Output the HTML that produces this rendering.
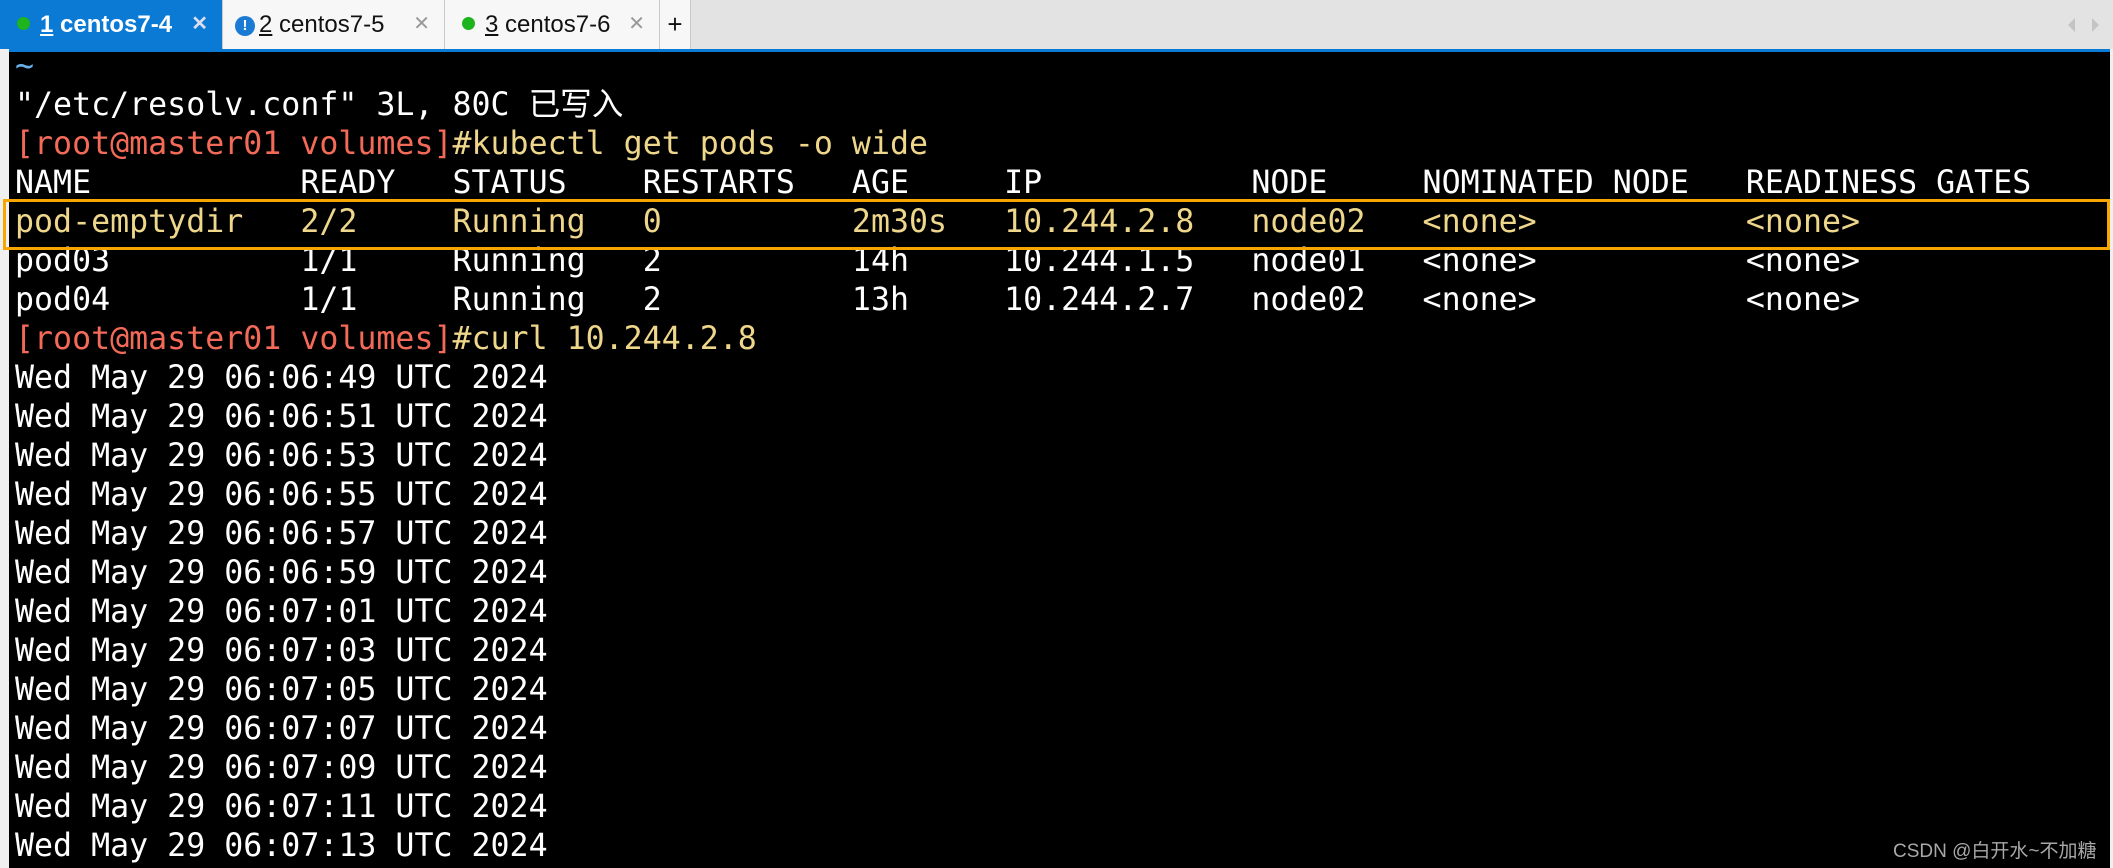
<!DOCTYPE html>
<html><head><meta charset="utf-8"><style>
html,body{margin:0;padding:0;width:2113px;height:868px;overflow:hidden;background:#f0f0f0;}
#tabs{position:absolute;left:0;top:0;width:2113px;height:49px;background:#e3e3e3;}
.tab{position:absolute;top:0;height:49px;background:#f7f7f7;border-right:1px solid #c8c8c8;font-family:"Liberation Sans",sans-serif;font-size:24px;line-height:49px;color:#111;white-space:nowrap;}
.tab .x{position:absolute;right:14px;top:0;color:#999;font-size:20px;}
.dot{display:inline-block;width:13px;height:13px;border-radius:50%;background:#1db41d;margin:0 10px 0 17px;vertical-align:2px;}
#blue{position:absolute;left:9px;top:49px;width:2101px;height:3px;background:#0a7ad4;}
#term{position:absolute;left:9px;top:52px;width:2101px;height:816px;background:#000;}
pre{position:absolute;left:15px;top:47px;margin:0;font-family:"DejaVu Sans Mono","Liberation Mono","Noto Sans CJK SC",monospace;font-size:31.6px;line-height:39px;color:#fff;}
.r{color:#f46a58}.y{color:#eed68a}.b{color:#6ab0e8}
#box{position:absolute;left:3px;top:199px;width:2101px;height:45px;border:3px solid #f7a600;}
#wm{position:absolute;left:1893px;top:836px;font-family:"Liberation Sans","Noto Sans CJK SC",sans-serif;font-size:19px;color:#a8a8a8;}
</style></head><body>
<div id="tabs">
 <div class="tab" style="left:0;width:222px;background:#0a7ad4;color:#fff;font-weight:bold;"><span class="dot"></span><u>1</u> centos7-4<span class="x" style="color:#dde">✕</span></div>
 <div class="tab" style="left:223px;width:221px;"><span style="display:inline-block;width:20px;height:20px;border-radius:50%;background:#1a7ad4;color:#fff;font-size:15px;line-height:20px;text-align:center;font-weight:bold;margin:0 4px 0 12px;vertical-align:2px;">!</span><u>2</u> centos7-5<span class="x">✕</span></div>
 <div class="tab" style="left:445px;width:214px;"><span class="dot"></span><u>3</u> centos7-6<span class="x">✕</span></div>
 <div class="tab" style="left:660px;width:30px;text-align:center;font-size:26px;">+</div>
 <div style="position:absolute;left:2068px;top:18px;width:0;height:0;border-top:7px solid transparent;border-bottom:7px solid transparent;border-right:7px solid #c4c4c4;"></div>
 <div style="position:absolute;left:2092px;top:18px;width:0;height:0;border-top:7px solid transparent;border-bottom:7px solid transparent;border-left:7px solid #c4c4c4;"></div>
</div>
<div id="blue"></div>
<div id="term"></div>
<pre><span class="b">~</span>
"/etc/resolv.conf" 3L, 80C 已写入
<span class="r">[root@master01 volumes]</span><span class="y">#kubectl get pods -o wide</span>
NAME           READY   STATUS    RESTARTS   AGE     IP           NODE     NOMINATED NODE   READINESS GATES
<span class="y">pod-emptydir   2/2     Running   0          2m30s   10.244.2.8   node02   &lt;none&gt;           &lt;none&gt;</span>
pod03          1/1     Running   2          14h     10.244.1.5   node01   &lt;none&gt;           &lt;none&gt;
pod04          1/1     Running   2          13h     10.244.2.7   node02   &lt;none&gt;           &lt;none&gt;
<span class="r">[root@master01 volumes]</span><span class="y">#curl 10.244.2.8</span>
Wed May 29 06:06:49 UTC 2024
Wed May 29 06:06:51 UTC 2024
Wed May 29 06:06:53 UTC 2024
Wed May 29 06:06:55 UTC 2024
Wed May 29 06:06:57 UTC 2024
Wed May 29 06:06:59 UTC 2024
Wed May 29 06:07:01 UTC 2024
Wed May 29 06:07:03 UTC 2024
Wed May 29 06:07:05 UTC 2024
Wed May 29 06:07:07 UTC 2024
Wed May 29 06:07:09 UTC 2024
Wed May 29 06:07:11 UTC 2024
Wed May 29 06:07:13 UTC 2024</pre>
<div id="box"></div>
<div id="wm">CSDN @白开水~不加糖</div>
</body></html>
